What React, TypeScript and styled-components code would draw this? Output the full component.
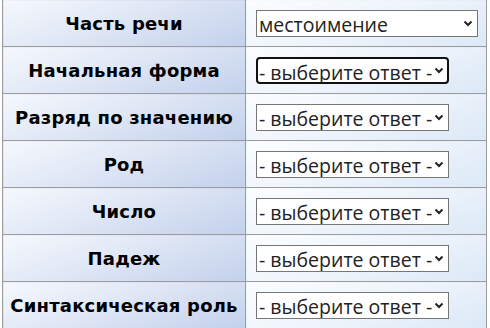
import * as React from 'react';
import styled, { createGlobalStyle } from 'styled-components';

const Global = createGlobalStyle`
  html, body {
    margin: 0;
    padding: 0;
    background: #ffffff;
  }
`;

const Page = styled.div`
  padding-left: 2px;
  margin-top: -1px;
`;

const Table = styled.table`
  border-collapse: collapse;
  table-layout: fixed;
  width: 485px;
`;

const Tr = styled.tr`
  height: 47px;
`;

const Th = styled.th`
  width: 234px;
  padding: 0 4px;
  border: 1px solid #9c9c9c;
  background: linear-gradient(160deg, #f5f8fd 0%, #e0e7f5 45%, #c3d1ec 100%);
  font-family: 'DejaVu Sans', Verdana, sans-serif;
  font-size: 18px;
  font-weight: 700;
  letter-spacing: 0.2px;
  color: #000;
  text-align: center;
  white-space: nowrap;
`;

const Td = styled.td`
  padding: 0 0 0 10px;
  border: 1px solid #9c9c9c;
  background: linear-gradient(160deg, #fbfdff 0%, #eef4fb 50%, #dbe8f6 100%);
`;

const SelectWrap = styled.span<{ $width: number }>`
  position: relative;
  display: inline-block;
  width: ${p => p.$width}px;
  height: 27px;
  vertical-align: middle;
`;

const Select = styled.select<{ $focused?: boolean }>`
  appearance: none;
  box-sizing: border-box;
  width: 100%;
  height: 100%;
  margin: 0;
  padding: 0 0 0 ${p => (p.$focused ? 1 : 2)}px;
  border: ${p => (p.$focused ? '2px solid #111' : '1px solid #767676')};
  border-radius: ${p => (p.$focused ? '4px' : '0')};
  background: #fff;
  font-family: 'Open Sans', 'Noto Sans', sans-serif;
  font-size: 19.5px;
  color: #222;
  outline: none;
`;

const Chevron = styled.svg`
  position: absolute;
  right: 5px;
  top: 10px;
  pointer-events: none;
`;

type Row = {
  label: string;
  value: string;
  width: number;
  focused?: boolean;
};

const rows: Row[] = [
  { label: 'Часть речи', value: 'местоимение', width: 222 },
  { label: 'Начальная форма', value: '- выберите ответ -', width: 193, focused: true },
  { label: 'Разряд по значению', value: '- выберите ответ -', width: 193 },
  { label: 'Род', value: '- выберите ответ -', width: 193 },
  { label: 'Число', value: '- выберите ответ -', width: 193 },
  { label: 'Падеж', value: '- выберите ответ -', width: 193 },
  { label: 'Синтаксическая роль', value: '- выберите ответ -', width: 193 },
];

export default function App() {
  return (
    <Page>
      <Global />
      <Table>
        <tbody>
          {rows.map(({ label, value, width, focused }) => (
            <Tr key={label}>
              <Th>{label}</Th>
              <Td>
                <SelectWrap $width={width}>
                  <Select $focused={focused} defaultValue={value}>
                    <option>{value}</option>
                  </Select>
                  <Chevron width="10" height="7" viewBox="0 0 10 7">
                    <path d="M1.5 1.5 L5 5 L8.5 1.5" fill="none" stroke="#222" strokeWidth="2" />
                  </Chevron>
                </SelectWrap>
              </Td>
            </Tr>
          ))}
        </tbody>
      </Table>
    </Page>
  );
}
